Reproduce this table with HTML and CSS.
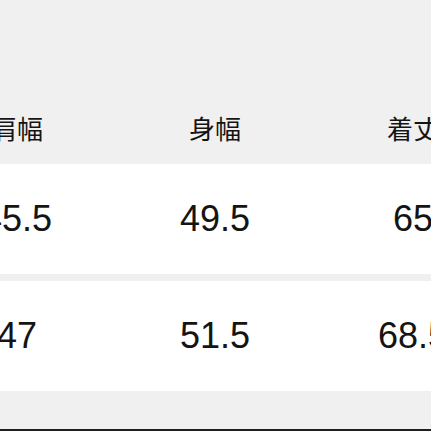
FILE: index.html
```html
<!DOCTYPE html>
<html lang="ja">
<head>
<meta charset="utf-8">
<link rel="stylesheet" href="styles.css">
</head>
<body>
<div class="page">
  <div class="table">
    <div class="row head">
      <div class="cell">肩幅</div>
      <div class="cell">身幅</div>
      <div class="cell">着丈</div>
    </div>
    <div class="row body">
      <div class="cell">45.5</div>
      <div class="cell">49.5</div>
      <div class="cell">65</div>
    </div>
    <div class="row body">
      <div class="cell">47</div>
      <div class="cell">51.5</div>
      <div class="cell">68.5</div>
    </div>
  </div>
  <div class="bottom-bar"></div>
</div>
</body>
</html>
```
FILE: styles.css
```css
html, body {
  margin: 0;
  padding: 0;
  background: #f0f0f0;
  overflow: hidden;
}
.page {
  width: 431px;
  height: 431px;
  display: flex;
  flex-direction: column;
  overflow: hidden;
}
.table {
  width: 594px;
  margin-left: -82px;
  padding-top: 95px;
  display: flex;
  flex-direction: column;
  gap: 7px;
  flex: 1;
}
.row {
  display: grid;
  grid-template-columns: 198px 198px 198px;
  align-items: center;
}
.cell {
  text-align: center;
  color: #141414;
}
.head {
  height: 69px;
  margin-bottom: -7px;
  font-family: "Noto Sans CJK JP", sans-serif;
  font-size: 26px;
  line-height: 1;
}
.head .cell {
  padding-bottom: 4px;
}
.body {
  background: #ffffff;
  height: 110px;
  font-family: "Liberation Sans", Arial, sans-serif;
  font-size: 36px;
  line-height: 1;
}
.bottom-bar {
  height: 2px;
  background: #1e1e1e;
}
```
